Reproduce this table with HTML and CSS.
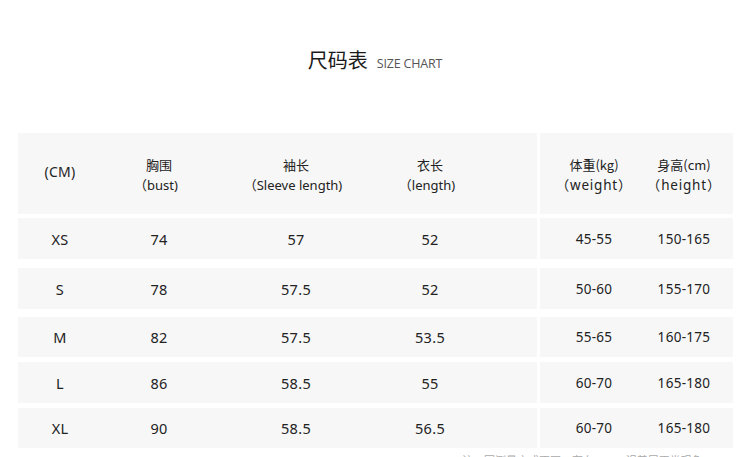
FILE: index.html
```html
<!DOCTYPE html>
<html lang="zh">
<head>
<meta charset="utf-8">
<title>尺码表 SIZE CHART</title>
<link rel="stylesheet" href="styles.css">
</head>
<body>
<div class="page">
  <h1 class="title"><span class="title-cn">尺码表</span><span class="title-en">SIZE CHART</span></h1>
  <div class="table">
    <div class="row head">
      <div class="left">
        <div class="cell unit">(CM)</div>
        <div class="cell"><span class="cn">胸围</span><span class="en">（bust)</span></div>
        <div class="cell"><span class="cn">袖长</span><span class="en">（Sleeve length)</span></div>
        <div class="cell"><span class="cn">衣长</span><span class="en">（length)</span></div>
        <div class="cell"></div>
      </div>
      <div class="right">
        <div class="cell"><span class="cn">体重(kg)</span><span class="en wide">（weight）</span></div>
        <div class="cell"><span class="cn">身高(cm)</span><span class="en wide">（height）</span></div>
        <div class="cell"></div>
      </div>
    </div>
    <div class="row r-xs">
      <div class="left"><div class="cell">XS</div><div class="cell">74</div><div class="cell">57</div><div class="cell">52</div><div class="cell"></div></div>
      <div class="right"><div class="cell">45-55</div><div class="cell">150-165</div><div class="cell"></div></div>
    </div>
    <div class="row r-s">
      <div class="left"><div class="cell">S</div><div class="cell">78</div><div class="cell">57.5</div><div class="cell">52</div><div class="cell"></div></div>
      <div class="right"><div class="cell">50-60</div><div class="cell">155-170</div><div class="cell"></div></div>
    </div>
    <div class="row r-m">
      <div class="left"><div class="cell">M</div><div class="cell">82</div><div class="cell">57.5</div><div class="cell">53.5</div><div class="cell"></div></div>
      <div class="right"><div class="cell">55-65</div><div class="cell">160-175</div><div class="cell"></div></div>
    </div>
    <div class="row r-l">
      <div class="left"><div class="cell">L</div><div class="cell">86</div><div class="cell">58.5</div><div class="cell">55</div><div class="cell"></div></div>
      <div class="right"><div class="cell">60-70</div><div class="cell">165-180</div><div class="cell"></div></div>
    </div>
    <div class="row r-xl">
      <div class="left"><div class="cell">XL</div><div class="cell">90</div><div class="cell">58.5</div><div class="cell">56.5</div><div class="cell"></div></div>
      <div class="right"><div class="cell">60-70</div><div class="cell">165-180</div><div class="cell"></div></div>
    </div>
  </div>
  <p class="note">注：因测量方式不同，存在1-3cm误差属正常现象</p>
</div>
</body>
</html>
```

FILE: styles.css
```css
html, body {
  margin: 0;
  padding: 0;
  background: #ffffff;
}
body {
  font-family: "Noto Sans", "Open Sans", "Noto Sans CJK SC", sans-serif;
  color: #222222;
  overflow: hidden;
  height: 457px;
}
.page {
  width: 750px;
}
.title {
  margin: 0;
  padding-top: 46px;
  height: 133px;
  box-sizing: border-box;
  display: flex;
  justify-content: center;
  align-items: baseline;
  gap: 9px;
  font-weight: normal;
}
.title-cn {
  font-family: "Noto Sans CJK SC", sans-serif;
  font-size: 20px;
  line-height: 28px;
  color: #1a1a1a;
}
.title-en {
  font-family: "Open Sans", "Noto Sans", sans-serif;
  font-size: 12.5px;
  color: #555555;
  letter-spacing: -0.2px;
}
.table {
  margin-left: 18px;
  width: 715px;
  display: flex;
  flex-direction: column;
}
.row {
  display: flex;
  gap: 3px;
  height: 41px;
}
.row.head {
  height: 81px;
}
.r-xs { margin-top: 4px; }
.r-s  { margin-top: 9px; }
.r-m  { margin-top: 8px; height: 40px; }
.r-l  { margin-top: 5px; }
.r-xl { margin-top: 5px; height: 40px; }
.left, .right {
  background: #f7f7f7;
  display: grid;
  align-items: center;
}
.left {
  width: 519px;
  grid-template-columns: 84px 114px 160px 108px 53px;
}
.right {
  width: 193px;
  grid-template-columns: 108px 72px 13px;
}
.cell {
  text-align: center;
  font-size: 14.5px;
  line-height: 20px;
  color: #222;
  letter-spacing: 0.3px;
}
.right .cell {
  font-size: 13.5px;
}
.head .cell {
  display: flex;
  flex-direction: column;
  align-items: center;
  padding-top: 2px;
  letter-spacing: 0;
}
.head .unit {
  padding-top: 0;
  font-size: 14px;
  letter-spacing: 0.3px;
  margin-top: -3px;
}
.cn {
  font-family: "Noto Sans CJK SC", sans-serif;
  font-size: 13px;
  line-height: 21px;
}
.en {
  font-family: "Noto Sans", "Noto Sans CJK SC", sans-serif;
  font-size: 13px;
  line-height: 21px;
  margin-left: -6px;
}
.en.wide {
  font-size: 13.5px;
  letter-spacing: 0.8px;
  margin-left: 0;
}
.right .cn {
  font-size: 13px;
}
.note {
  margin: 4px 0 0 462px;
  font-family: "Noto Sans CJK SC", sans-serif;
  font-size: 11px;
  line-height: 16px;
  color: #aaaaaa;
  white-space: nowrap;
}
```
